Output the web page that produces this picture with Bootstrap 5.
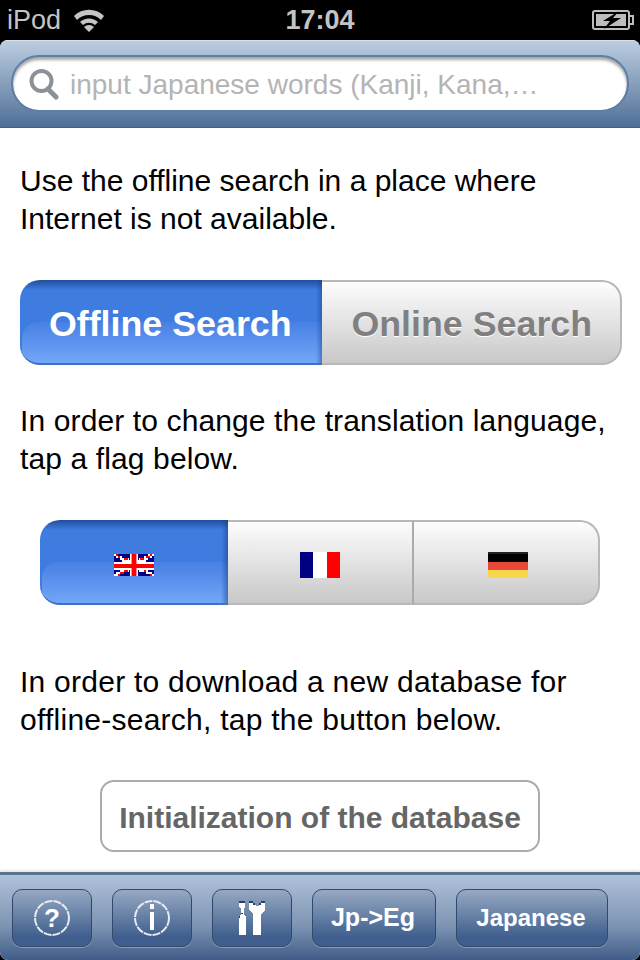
<!DOCTYPE html>
<html lang="en">
<head>
<meta charset="UTF-8">
<title>Offline search settings</title>
<link rel="stylesheet" href="https://cdn.jsdelivr.net/npm/bootstrap@5.3.0/dist/css/bootstrap.min.css">
<style>
html, body { height: 960px; overflow: hidden; background: #000; }
body { font-family: "Liberation Sans", Arial, sans-serif; color: #000; }
.phone-status { height: 40px; background: #000; color: #c4c4c4; font-size: 27px; padding: 0 6px 0 7px; position: relative; }
.phone-clock { position: absolute; left: 0; right: 0; top: 0; line-height: 40px; text-align: center; font-weight: 700; font-size: 27px; }
.phone-screen { height: 920px; background: #fff; border-radius: 8px; overflow: hidden; }
.search-head { height: 88px; padding: 14px 11px 16px 11px; background: linear-gradient(#bccde0, #8ba3bf 45%, #4f6f97); border-top: 1px solid #d5e0ec; border-bottom: 1px solid #3f5f88; }
.search-wrap { height: 57px; position: relative; }
.search-input.form-control { height: 57px; border-radius: 28px; border: 2px solid #5f7ea5; padding: 2px 20px 0 57px; font-size: 28px; color: #333; box-shadow: inset 0 3px 3px rgba(0,0,0,.35); }
.search-input::placeholder { color: #b4b4b4; opacity: 1; }
.search-icon { position: absolute; left: 18px; top: 13px; }
.main-area { height: 744px; padding: 34px 18px 0 20px; overflow: hidden; }
.help-text { font-size: 30px; line-height: 38px; margin: 0; white-space: nowrap; }
.seg-btn.btn { border-radius: 0; border: 0; padding: 0; font-weight: 700; }
.seg-on.btn, .seg-on.btn:hover { position: relative; overflow: hidden; color: #fff; background: linear-gradient(#1f4e9c 0, #3f7ce0 12%, #3f7ce0 100%); border-bottom: 2px solid #3f70c4; }
.seg-on.btn::before { content: ""; position: absolute; left: 2px; right: 0; top: 50%; bottom: 0; border-radius: 16px 0 0 0; background: linear-gradient(#4880e3, #72a6f9); }
.seg-on.btn::after { content: ""; position: absolute; top: 0; right: 0; bottom: 0; width: 7px; background: linear-gradient(to right, rgba(20,60,130,0), rgba(20,60,130,.5)); }
.seg-on.btn > * { position: relative; z-index: 1; }
.seg-off.btn, .seg-off.btn:hover { color: #808080; background: linear-gradient(#fdfdfd, #c8c8c8); border-top: 2px solid #b8b8b8; border-bottom: 2px solid #b8b8b8; text-shadow: 0 1px 0 #fff; }
.seg-end { border-right: 2px solid #b8b8b8 !important; }
.mode-seg { height: 85px; margin-top: 42px; }
.mode-seg .seg-btn { font-size: 35.8px; }
.mode-seg .seg-on .seg-label { display: block; padding: 6px 2px 0 0; }
.mode-seg .seg-off .seg-label { display: block; padding: 4px 0 0 2px; }
.mode-on.btn { width: 302px; border-radius: 20px 0 0 20px; }
.mode-off.btn { width: 300px; border-radius: 0 20px 20px 0; }
.lang-seg { width: 560px; height: 85px; margin: 0 0 0 20px; display: flex; }
.lang-en.btn { width: 188px; border-radius: 20px 0 0 20px; padding-top: 6px; }
.lang-fr.btn { width: 186px; border-right: 2px solid #ababab; padding-top: 4px; }
.lang-de.btn { width: 186px; border-radius: 0 20px 20px 0; padding: 4px 0 0 4px; }
.lang-note { margin-top: 37px; margin-bottom: 42px; letter-spacing: .12px; }
.db-note { margin-top: 58px; letter-spacing: .25px; }
.db-btn.btn { display: block; width: 440px; height: 72px; margin: 41px 0 0 80px; background: #fff; border: 2px solid #ababab; border-radius: 14px; color: #666; font-size: 30px; font-weight: 700; padding: 3px 0 0; text-shadow: 0 1px 0 #fff; }
.tool-bar { height: 88px; padding: 14px 12px 0; gap: 20px; background: linear-gradient(#b0c1d9, #7d94b3 60%, #3f5c88); border-top: 3px solid #5b7491; box-shadow: 0 -2px 2px #e6e6e6; }
.tool-btn.btn { height: 58px; padding: 0; color: #fff; font-size: 24px; font-weight: 700; border: 1px solid #33496b; border-radius: 10px; background: linear-gradient(#96a9c3, #3f5e8d 85%); box-shadow: 0 1px 0 rgba(255,255,255,.3); display: flex; align-items: center; justify-content: center; }
.tool-icon { width: 80px; }
.tool-dir.btn { width: 124px; font-size: 25px; padding-right: 2px; }
.tool-lang.btn { width: 152px; padding-right: 2px; }
</style>
</head>
<body>
<div class="phone-status d-flex align-items-center gap-2">
    <span>iPod</span>
    <svg width="32" height="24" viewBox="0 0 32 24" class="ms-1"><path d="M1 8 A21 21 0 0 1 31 8 L28 12 A17 17 0 0 0 4 12 Z M7 14 A13 13 0 0 1 25 14 L22 17 A9 9 0 0 0 10 17 Z M16 24 L11 19 A7 7 0 0 1 21 19 Z" fill="#c4c4c4"/></svg>
    <span class="phone-clock">17:04</span>
    <svg class="ms-auto" width="42" height="20" viewBox="0 0 42 20"><rect x="1" y="1" width="36" height="18" rx="2" fill="none" stroke="#bdbdbd" stroke-width="2"/><rect x="4" y="4" width="30" height="12" fill="#bdbdbd"/><path d="M38 6h3v8h-3" fill="none" stroke="#bdbdbd" stroke-width="2"/><path d="M27 1 L11 11 H18 L12 19 L29 8 H21 Z" fill="#000"/></svg>
</div>
<div class="phone-screen d-flex flex-column">
    <div class="search-head">
        <div class="search-wrap">
            <input class="form-control search-input" type="text" placeholder="input Japanese words (Kanji, Kana,…">
            <svg class="search-icon" width="30" height="32" viewBox="0 0 30 32"><circle cx="12.5" cy="13" r="10" fill="none" stroke="#8b9199" stroke-width="4"/><path d="M19 21 L27 29" stroke="#8b9199" stroke-width="5" stroke-linecap="round"/></svg>
        </div>
    </div>
    <div class="main-area">
        <p class="help-text">Use the offline search in a place where<br>Internet is not available.</p>
        <div class="btn-group d-flex mode-seg">
            <button class="btn seg-btn seg-on mode-on" type="button"><span class="seg-label">Offline Search</span></button>
            <button class="btn seg-btn seg-off seg-end mode-off" type="button"><span class="seg-label">Online Search</span></button>
        </div>
        <p class="help-text lang-note">In order to change the translation language,<br>tap a flag below.</p>
        <div class="lang-seg">
            <button class="btn seg-btn seg-on lang-en" type="button">
                <svg width="40" height="22" viewBox="0 0 40 22" shape-rendering="crispEdges">
                    <rect width="40" height="22" fill="#000080"/>
                    <g fill="#fff"><rect width="4" height="2"/><rect x="2" y="2" width="6" height="2"/><rect x="6" y="4" width="9" height="2"/><rect x="34" width="6" height="2"/><rect x="30" y="2" width="8" height="2"/><rect x="25" y="4" width="9" height="2"/><rect y="20" width="6" height="2"/><rect x="2" y="18" width="8" height="2"/><rect x="6" y="16" width="9" height="2"/><rect x="36" y="20" width="4" height="2"/><rect x="32" y="18" width="6" height="2"/><rect x="25" y="16" width="9" height="2"/><rect y="8" width="40" height="8"/><rect y="6" x="8" width="24" height="2"/><rect x="16" width="8" height="22"/></g>
                    <g fill="#f00"><rect x="2" width="2" height="2"/><rect x="4" y="2" width="2" height="2"/><rect x="10" y="4" width="4" height="2"/><rect x="36" width="2" height="2"/><rect x="32" y="2" width="4" height="2"/><rect x="26" y="4" width="4" height="2"/><rect x="4" y="20" width="2" height="2"/><rect x="6" y="18" width="4" height="2"/><rect x="10" y="16" width="4" height="2"/><rect x="36" y="20" width="2" height="2"/><rect x="30" y="16" width="2" height="2"/><rect y="10" width="40" height="4"/><rect x="18" width="4" height="22"/></g>
                    <g fill="#ff9090"><rect x="17" width="1" height="10"/><rect x="22" width="1" height="10"/><rect x="17" y="14" width="1" height="8"/><rect x="22" y="14" width="1" height="8"/></g>
                </svg>
            </button>
            <button class="btn seg-btn seg-off lang-fr" type="button">
                <svg width="40" height="26" viewBox="0 0 40 26" shape-rendering="crispEdges"><rect width="13" height="26" fill="#000080"/><rect x="13" width="14" height="26" fill="#fff"/><rect x="27" width="13" height="26" fill="#f00"/></svg>
            </button>
            <button class="btn seg-btn seg-off seg-end lang-de" type="button">
                <svg width="40" height="26" viewBox="0 0 40 26" shape-rendering="crispEdges"><rect width="40" height="2" fill="#222"/><rect y="2" width="40" height="8" fill="#000"/><rect y="10" width="40" height="8" fill="#e8483a"/><rect y="18" width="40" height="8" fill="#f8d64c"/></svg>
            </button>
        </div>
        <p class="help-text db-note">In order to download a new database for<br>offline-search, tap the button below.</p>
        <button class="btn db-btn" type="button">Initialization of the database</button>
    </div>
    <div class="tool-bar d-flex align-items-start">
        <button class="btn tool-btn tool-icon" type="button" aria-label="Help">
            <svg width="38" height="38" viewBox="0 0 38 38"><circle cx="19" cy="19" r="17" fill="none" stroke="#e8ecf2" stroke-width="2" stroke-dasharray="8 1"/><text x="19" y="28" text-anchor="middle" font-family="Liberation Sans" font-weight="700" font-size="26" fill="#fff">?</text></svg>
        </button>
        <button class="btn tool-btn tool-icon" type="button" aria-label="Info">
            <svg width="38" height="38" viewBox="0 0 38 38"><circle cx="19" cy="19" r="17" fill="none" stroke="#e8ecf2" stroke-width="2" stroke-dasharray="8 1"/><rect x="17" y="5" width="4" height="5" fill="#fff"/><rect x="17" y="13" width="4" height="18" fill="#fff"/></svg>
        </button>
        <button class="btn tool-btn tool-icon" type="button" aria-label="Settings">
            <svg width="28" height="34" viewBox="0 0 28 34" shape-rendering="crispEdges">
                <path d="M1 2h6v4l-1 1v6l2 3v18H1V16l2-3V7L1 6Z" fill="#fff"/>
                <path d="M11 2h4l3 3h2l3-3h4v7l-4 4v21h-8V13l-4-4Z" fill="#fff"/>
                <path d="M1 0h6v2H1ZM11 0h4v2h-4ZM23 0h4v2h-4ZM15 2h2v2h-2ZM21 2h2v2h-2ZM3 12h2v1H3ZM1 15h1v2H1Z" fill="#2d3f5c"/>
            </svg>
        </button>
        <button class="btn tool-btn tool-dir" type="button">Jp-&gt;Eg</button>
        <button class="btn tool-btn tool-lang" type="button">Japanese</button>
    </div>
</div>
<script src="https://cdn.jsdelivr.net/npm/bootstrap@5.3.0/dist/js/bootstrap.bundle.min.js"></script>
</body>
</html>
